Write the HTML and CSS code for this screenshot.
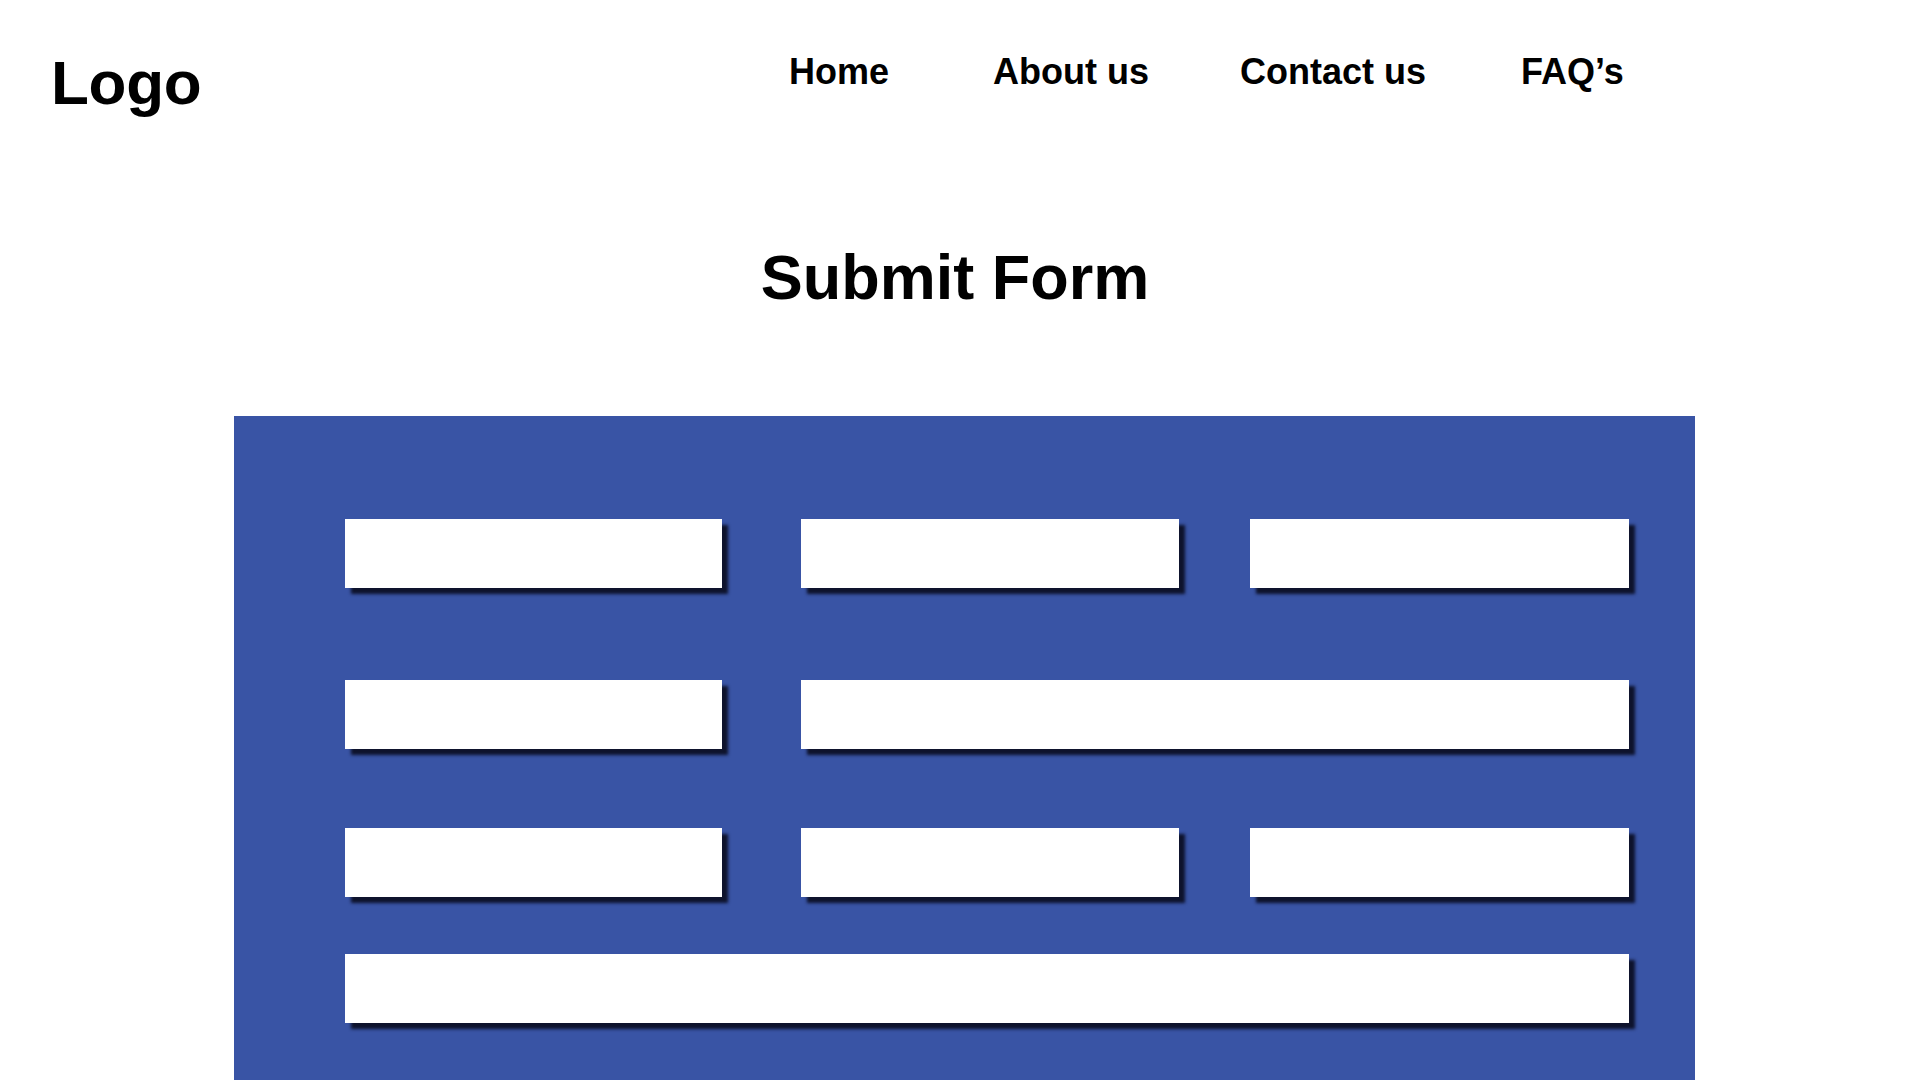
FILE: index.html
```html
<!DOCTYPE html>
<html lang="en">
<head>
<meta charset="utf-8">
<title>Submit Form</title>
<link rel="stylesheet" href="styles.css">
</head>
<body>
<header class="site-header">
  <div class="logo">Logo</div>
  <nav class="nav">
    <a class="nav-link" href="#">Home</a>
    <a class="nav-link nav-about" href="#">About us</a>
    <a class="nav-link nav-contact" href="#">Contact us</a>
    <a class="nav-link nav-faq" href="#">FAQ’s</a>
  </nav>
</header>
<h1 class="title">Submit Form</h1>
<section class="panel">
  <div class="form-grid">
    <div class="field c1 r1"></div>
    <div class="field c2 r1"></div>
    <div class="field c3 r1"></div>
    <div class="field c1 r2"></div>
    <div class="field c23 r2"></div>
    <div class="field c1 r3"></div>
    <div class="field c2 r3"></div>
    <div class="field c3 r3"></div>
    <div class="field call r4"></div>
  </div>
</section>
</body>
</html>
```
FILE: styles.css
```css
html, body {
  margin: 0;
  padding: 0;
  background: #ffffff;
  overflow: hidden;
}
body {
  font-family: "Liberation Sans", Arial, Helvetica, sans-serif;
  font-weight: bold;
  color: #000;
  width: 1920px;
  height: 1080px;
}
.site-header {
  display: flex;
  align-items: flex-start;
  padding: 52px 0 0 51px;
}
.logo {
  width: 738px;
  font-size: 62px;
  line-height: 62px;
  letter-spacing: -0.3px;
}
.nav {
  display: flex;
  margin-top: 2px;
}
.nav-link {
  font-size: 36px;
  line-height: 36px;
  color: #000;
  text-decoration: none;
}
.nav-about { margin-left: 104px; }
.nav-contact { margin-left: 91px; }
.nav-faq { margin-left: 95px; }
.title {
  margin: 131px 0 0 0;
  font-size: 63px;
  line-height: 64px;
  text-align: center;
  padding-right: 10px;
}
.panel {
  margin: 107px 0 0 234px;
  width: 1461px;
  box-sizing: border-box;
  padding: 103px 66px 60px 111px;
  background: #3954a5;
}
.form-grid {
  display: grid;
  grid-template-columns: 377px 79px 378px 71px 379px;
  grid-template-rows: 69px 92px 69px 79px 69px 57px 69px;
}
.field {
  background: #ffffff;
  box-shadow: 6px 6px 3px rgba(12, 16, 38, 0.95);
}
.c1 { grid-column: 1; }
.c2 { grid-column: 3; }
.c3 { grid-column: 5; }
.c23 { grid-column: 3 / 6; }
.call { grid-column: 1 / 6; }
.r1 { grid-row: 1; }
.r2 { grid-row: 3; }
.r3 { grid-row: 5; }
.r4 { grid-row: 7; }
```
